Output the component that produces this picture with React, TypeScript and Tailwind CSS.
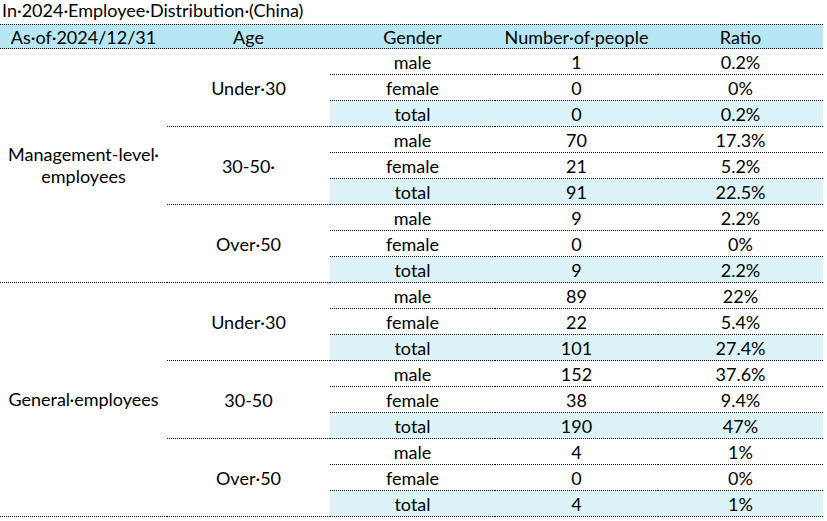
import React from "react";

type Row = { gender: string; count: string; ratio: string };
type AgeGroup = { age: string; rows: Row[] };
type Category = { name: React.ReactNode; groups: AgeGroup[] };

const data: Category[] = [
  {
    name: (
      <>
        Management-level·
        <br />
        employees
      </>
    ),
    groups: [
      {
        age: "Under·30",
        rows: [
          { gender: "male", count: "1", ratio: "0.2%" },
          { gender: "female", count: "0", ratio: "0%" },
          { gender: "total", count: "0", ratio: "0.2%" },
        ],
      },
      {
        age: "30-50·",
        rows: [
          { gender: "male", count: "70", ratio: "17.3%" },
          { gender: "female", count: "21", ratio: "5.2%" },
          { gender: "total", count: "91", ratio: "22.5%" },
        ],
      },
      {
        age: "Over·50",
        rows: [
          { gender: "male", count: "9", ratio: "2.2%" },
          { gender: "female", count: "0", ratio: "0%" },
          { gender: "total", count: "9", ratio: "2.2%" },
        ],
      },
    ],
  },
  {
    name: "General·employees",
    groups: [
      {
        age: "Under·30",
        rows: [
          { gender: "male", count: "89", ratio: "22%" },
          { gender: "female", count: "22", ratio: "5.4%" },
          { gender: "total", count: "101", ratio: "27.4%" },
        ],
      },
      {
        age: "30-50",
        rows: [
          { gender: "male", count: "152", ratio: "37.6%" },
          { gender: "female", count: "38", ratio: "9.4%" },
          { gender: "total", count: "190", ratio: "47%" },
        ],
      },
      {
        age: "Over·50",
        rows: [
          { gender: "male", count: "4", ratio: "1%" },
          { gender: "female", count: "0", ratio: "0%" },
          { gender: "total", count: "4", ratio: "1%" },
        ],
      },
    ],
  },
];

const cell = "flex items-center justify-center border-b border-dotted border-black";

const App = () => {
  return (
    <div className="w-[827px] h-[521px] bg-white text-[18px] text-black font-['Lato','Liberation_Sans',sans-serif] leading-none">
      {/* ==== Title ==== */}
      <div className="h-6 pl-0.5 pt-[1px]">In·2024·Employee·Distribution·(China)</div>

      <div className="grid w-[823px] grid-cols-[167px_163px_165px_163px_165px]">
        {/* Header */}
        <div className="col-span-5 grid h-[25px] grid-cols-subgrid border-y border-dotted border-black bg-[#b7e6f4]">
          <div className="flex items-center justify-center">As·of·2024/12/31</div>
          <div className="flex items-center justify-center">Age</div>
          <div className="flex items-center justify-center">Gender</div>
          <div className="flex items-center justify-center">Number·of·people</div>
          <div className="flex items-center justify-center">Ratio</div>
        </div>

        {data.map((cat, ci) => (
          <React.Fragment key={ci}>
            <div className={`${cell} row-span-9 text-center leading-[22px] pb-[2px]`}>
              <div>{cat.name}</div>
            </div>
            {cat.groups.map((g, gi) => (
              <React.Fragment key={gi}>
                <div className={`${cell} row-span-3 col-start-2`}>{g.age}</div>
                {g.rows.map((r, ri) => {
                  const bg = r.gender === "total" ? "bg-[#ddf3fa]" : "";
                  return (
                    <React.Fragment key={ri}>
                      <div className={`${cell} ${bg} col-start-3 h-[26px]`}>{r.gender}</div>
                      <div className={`${cell} ${bg} h-[26px]`}>{r.count}</div>
                      <div className={`${cell} ${bg} h-[26px]`}>{r.ratio}</div>
                    </React.Fragment>
                  );
                })}
              </React.Fragment>
            ))}
          </React.Fragment>
        ))}
      </div>
    </div>
  );
};

export default App;
